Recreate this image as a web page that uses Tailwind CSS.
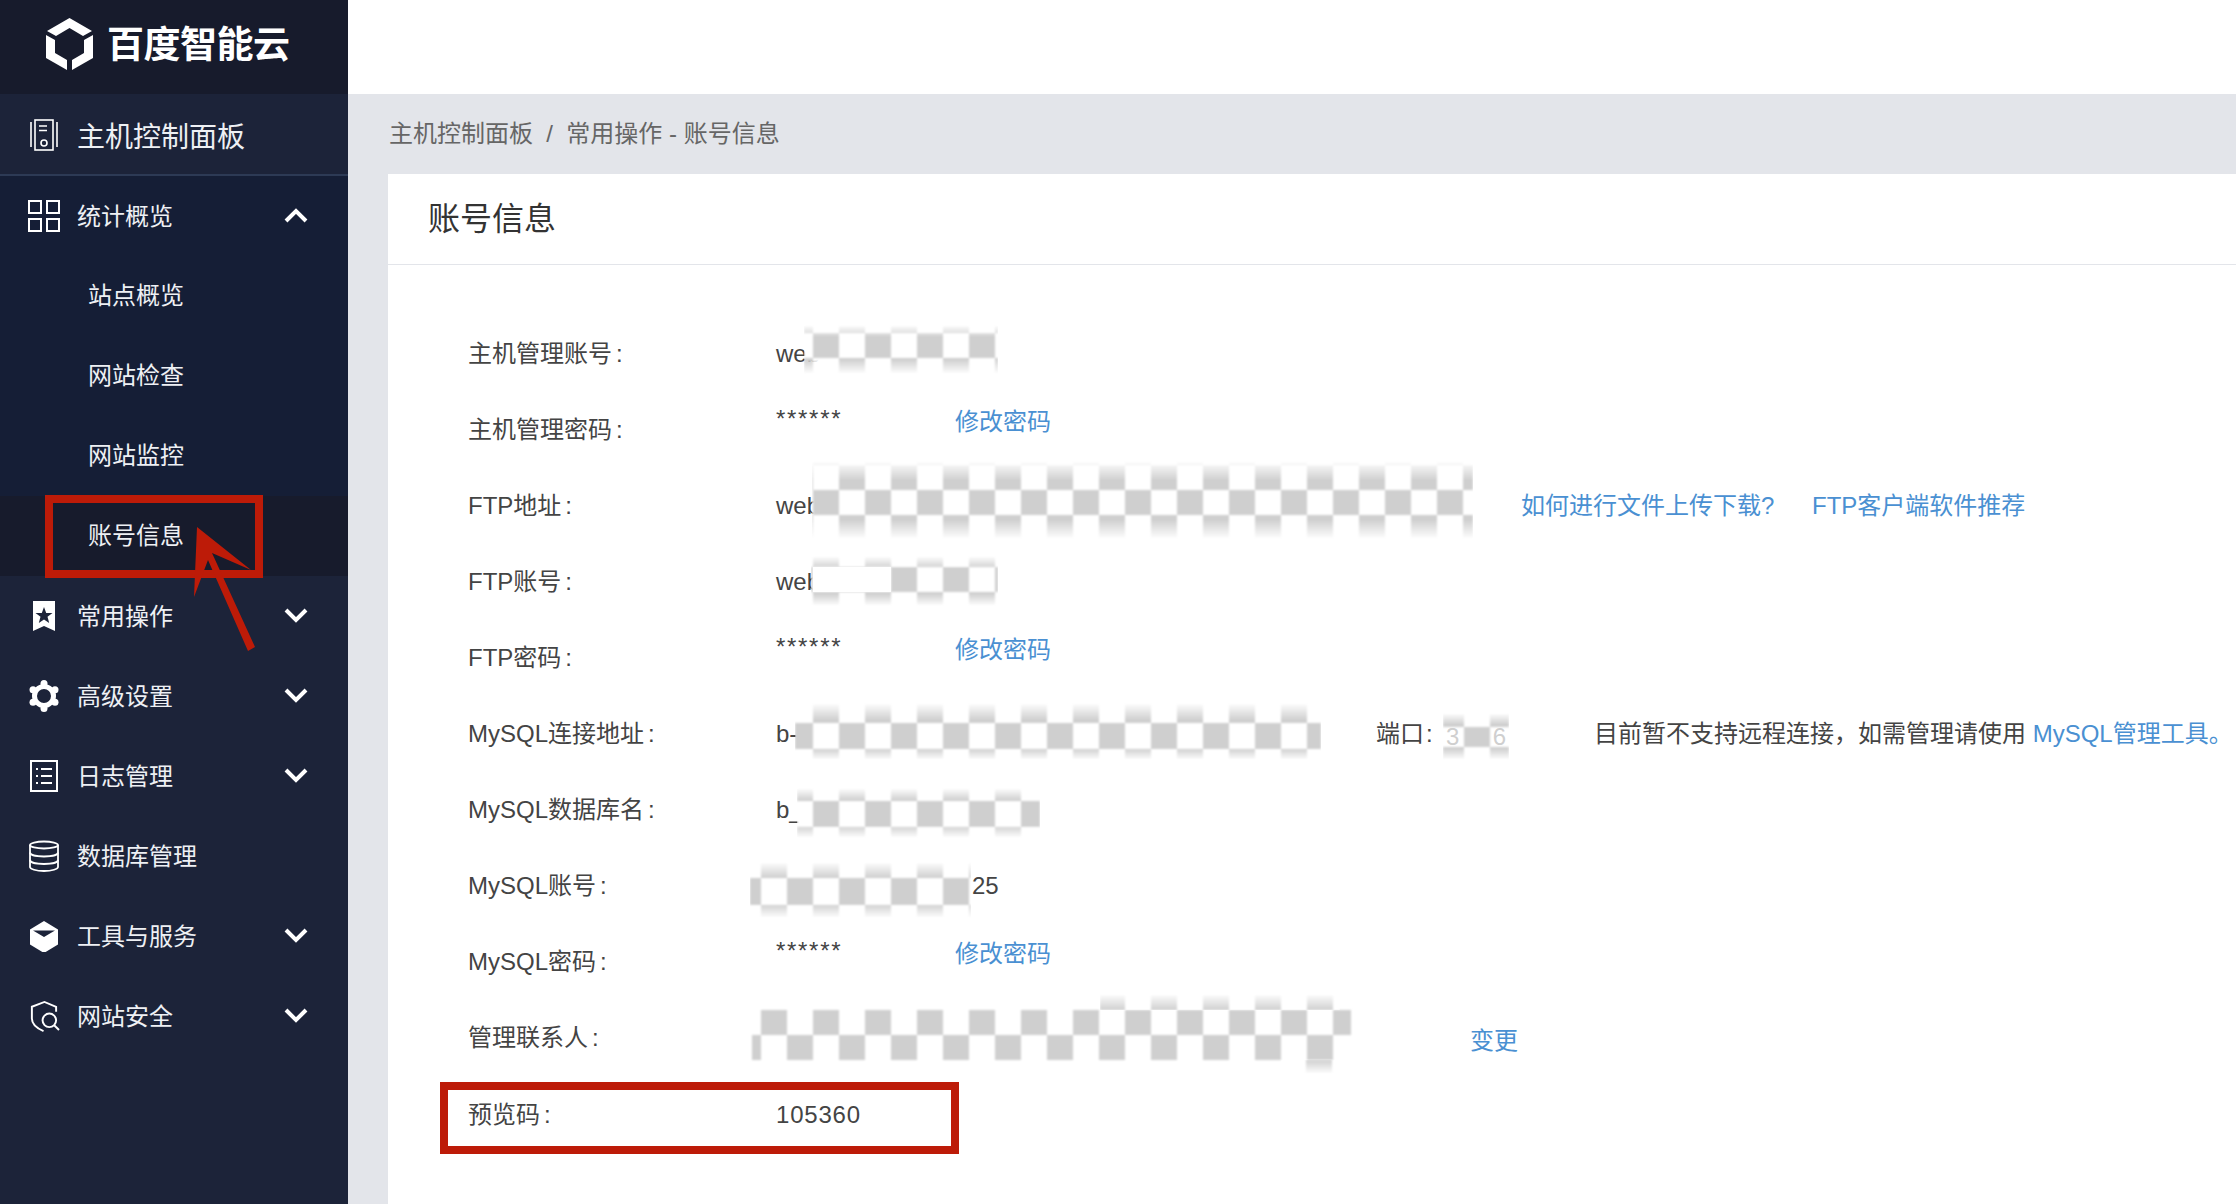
<!DOCTYPE html>
<html lang="zh" class="h-[1204px] overflow-hidden">
<head>
<meta charset="utf-8">
<title>账号信息</title>
<script src="https://cdn.jsdelivr.net/npm/@tailwindcss/browser@4"></script>
</head>
<body class="h-[1204px] font-['Liberation_Sans','Noto_Sans_CJK_SC',sans-serif] overflow-hidden">
<div class="relative flex w-[2236px] h-[1204px] bg-white overflow-hidden">

  <!-- Sidebar -->
  <aside class="w-[348px] shrink-0 bg-[#1c2339] text-[#eef0f4]">
    <div class="h-[94px] bg-[#171b2c] flex items-center pl-[46px] pb-[6px] gap-[14px] text-white">
      <svg class="w-[47px] h-[52px]" viewBox="0 0 47 52" fill="#fff"><path d="M23.500 0L46 13L37 18L23.500 10L10 18L1 13Z"/><path d="M0 17L9 22V35L21 42V52L0 40Z"/><path d="M47 17L38 22V35L26 42V52L47 40Z"/></svg>
      <span class="text-[37px] font-bold leading-none tracking-[-0.5px] mt-[3px]">百度智能云</span>
    </div>
    <div class="h-[82px] flex items-center border-b-2 border-[#2d3a55] pl-[30px] pt-[2px] gap-[19px]">
      <svg class="w-[28px] h-[32px]" viewBox="0 0 28 32" fill="none" stroke="#fff" stroke-width="1.600"><path d="M1 3V28M27 3V28"/><rect x="5" y="1" width="18" height="30"/><path d="M9 7H17M9 11.500H17"/><circle cx="14" cy="24" r="3"/></svg>
      <span class="text-[28px] mt-[5px]">主机控制面板</span>
    </div>
    <div class="bg-[#151e36]">
      <div class="h-[80px] flex items-center pl-[28px] pr-[40px] gap-[17px] text-[24px]">
        <svg class="w-[32px] h-[32px]" viewBox="0 0 32 32" fill="none" stroke="#fff" stroke-width="2"><rect x="1" y="1" width="12" height="12"/><rect x="19" y="1" width="12" height="12"/><rect x="1" y="19" width="12" height="12"/><rect x="19" y="19" width="12" height="12"/></svg>
        <span class="flex-1 mt-[2px]">统计概览</span>
        <svg class="w-[24px] h-[16px]" viewBox="0 0 24 16" fill="none" stroke="#fff" stroke-width="4"><path d="M2 13L12 3L22 13"/></svg>
      </div>
      <div class="h-[80px] flex items-center pl-[88px] pb-[1px] text-[24px]">站点概览</div>
      <div class="h-[80px] flex items-center pl-[88px] pb-[1px] text-[24px]">网站检查</div>
      <div class="h-[80px] flex items-center pl-[88px] pb-[1px] text-[24px]">网站监控</div>
      <div class="h-[80px] flex items-center pl-[88px] pb-[1px] text-[24px] bg-[#171b2c]">账号信息</div>
    </div>
    <div class="h-[80px] flex items-center pl-[28px] pr-[40px] gap-[17px] text-[24px]">
      <svg class="w-[32px] h-[32px]" viewBox="0 0 32 32" fill="#fff"><path fill-rule="evenodd" d="M5 1H27V31L16 26L5 31ZM16 7L18.200 13H24.500L19.500 16.800L21.200 23L16 19.400L10.800 23L12.500 16.800L7.500 13H13.800Z"/></svg>
      <span class="flex-1 mt-[2px]">常用操作</span>
      <svg class="w-[24px] h-[16px] -mt-[2px]" viewBox="0 0 24 16" fill="none" stroke="#fff" stroke-width="4"><path d="M2 3L12 13L22 3"/></svg>
    </div>
    <div class="h-[80px] flex items-center pl-[28px] pr-[40px] gap-[17px] text-[24px]">
      <svg class="w-[32px] h-[32px]" viewBox="0 0 32 32"><circle cx="16" cy="16" r="9.500" fill="none" stroke="#fff" stroke-width="5"/><g fill="#fff"><circle cx="16" cy="3.500" r="3.500"/><circle cx="16" cy="28.500" r="3.500"/><circle cx="5" cy="9.700" r="3.500"/><circle cx="27" cy="9.700" r="3.500"/><circle cx="5" cy="22.300" r="3.500"/><circle cx="27" cy="22.300" r="3.500"/></g></svg>
      <span class="flex-1 mt-[2px]">高级设置</span>
      <svg class="w-[24px] h-[16px] -mt-[2px]" viewBox="0 0 24 16" fill="none" stroke="#fff" stroke-width="4"><path d="M2 3L12 13L22 3"/></svg>
    </div>
    <div class="h-[80px] flex items-center pl-[28px] pr-[40px] gap-[17px] text-[24px]">
      <svg class="w-[32px] h-[32px]" viewBox="0 0 32 32" fill="none" stroke="#fff" stroke-width="2"><rect x="3" y="1" width="26" height="30"/><path d="M8 9H10M13 9H24M8 16H10M13 16H24M8 23H10M13 23H24"/></svg>
      <span class="flex-1 mt-[2px]">日志管理</span>
      <svg class="w-[24px] h-[16px] -mt-[2px]" viewBox="0 0 24 16" fill="none" stroke="#fff" stroke-width="4"><path d="M2 3L12 13L22 3"/></svg>
    </div>
    <div class="h-[80px] flex items-center pl-[28px] pr-[40px] gap-[17px] text-[24px]">
      <svg class="w-[32px] h-[32px]" viewBox="0 0 32 32" fill="none" stroke="#fff" stroke-width="1.800"><ellipse cx="16" cy="5" rx="14" ry="3.500"/><path d="M2 5V27C2 29 8 31 16 31S30 29 30 27V5"/><path d="M2 12.500C2 15 8 16.500 16 16.500S30 15 30 12.500M2 20C2 22.500 8 24 16 24S30 22.500 30 20"/></svg>
      <span class="flex-1 mt-[2px]">数据库管理</span>
    </div>
    <div class="h-[80px] flex items-center pl-[28px] pr-[40px] gap-[17px] text-[24px]">
      <svg class="w-[32px] h-[32px]" viewBox="0 0 32 32" fill="#fff"><path fill-rule="evenodd" d="M16 1L30 9.500V24.500L16 33L2 24.500V9.500ZM5 10.500H27L16 17Z"/></svg>
      <span class="flex-1 mt-[2px]">工具与服务</span>
      <svg class="w-[24px] h-[16px] -mt-[2px]" viewBox="0 0 24 16" fill="none" stroke="#fff" stroke-width="4"><path d="M2 3L12 13L22 3"/></svg>
    </div>
    <div class="h-[80px] flex items-center pl-[28px] pr-[40px] gap-[17px] text-[24px]">
      <svg class="w-[32px] h-[32px]" viewBox="0 0 33 33" fill="none" stroke="#fff" stroke-width="2"><path d="M29 12V7L17 2L4 7V19C4 25 9 29 16 32"/><circle cx="22" cy="21" r="7"/><path d="M27 26L32 31"/></svg>
      <span class="flex-1 mt-[2px]">网站安全</span>
      <svg class="w-[24px] h-[16px] -mt-[2px]" viewBox="0 0 24 16" fill="none" stroke="#fff" stroke-width="4"><path d="M2 3L12 13L22 3"/></svg>
    </div>
  </aside>

  <!-- Main -->
  <main class="flex-1 flex flex-col">
    <div class="h-[94px] bg-white"></div>
    <div class="h-[80px] bg-[#e3e5ea] flex items-center pl-[41px] pb-[1px] text-[24px] text-[#666]">主机控制面板&nbsp;&nbsp;/&nbsp;&nbsp;常用操作 - 账号信息</div>
    <div class="flex-1 bg-[#e3e5ea] pl-[40px]">
      <div class="h-full bg-white">
        <div class="h-[91px] flex items-center pl-[40px] text-[32px] text-[#333] border-b border-[#e3e5ea]">账号信息</div>
        <div class="pt-[51px] pl-[80px] text-[24px] text-[#444]">
          <div class="h-[76px] flex items-center"><span class="w-[308px]">主机管理账号<i class="ml-[4px] not-italic">:</i></span><span>web</span></div>
          <div class="h-[76px] flex items-center"><span class="w-[308px]">主机管理密码<i class="ml-[4px] not-italic">:</i></span><span class="w-[179px] -mt-[22px] tracking-[1.700px]">******</span><a class="text-[#4a90d2] -mt-[16px]">修改密码</a></div>
          <div class="h-[76px] flex items-center"><span class="w-[308px]">FTP地址<i class="ml-[4px] not-italic">:</i></span><span class="w-[745px]">web</span><a class="text-[#4a90d2] w-[291px]">如何进行文件上传下载?</a><a class="text-[#4a90d2]">FTP客户端软件推荐</a></div>
          <div class="h-[76px] flex items-center"><span class="w-[308px]">FTP账号<i class="ml-[4px] not-italic">:</i></span><span>web</span></div>
          <div class="h-[76px] flex items-center"><span class="w-[308px]">FTP密码<i class="ml-[4px] not-italic">:</i></span><span class="w-[179px] -mt-[22px] tracking-[1.700px]">******</span><a class="text-[#4a90d2] -mt-[16px]">修改密码</a></div>
          <div class="h-[76px] flex items-center"><span class="w-[308px]">MySQL连接地址<i class="ml-[4px] not-italic">:</i></span><span class="w-[600px]">b-</span><span class="w-[218px]">端口<i class="ml-[2px] not-italic">:</i></span><span class="whitespace-nowrap">目前暂不支持远程连接，如需管理请使用 <a class="text-[#4a90d2]">MySQL管理工具。</a></span></div>
          <div class="h-[76px] flex items-center"><span class="w-[308px]">MySQL数据库名<i class="ml-[4px] not-italic">:</i></span><span>b_</span></div>
          <div class="h-[76px] flex items-center"><span class="w-[308px]">MySQL账号<i class="ml-[4px] not-italic">:</i></span><span class="pl-[196px]">25</span></div>
          <div class="h-[76px] flex items-center"><span class="w-[308px]">MySQL密码<i class="ml-[4px] not-italic">:</i></span><span class="w-[179px] -mt-[22px] tracking-[1.700px]">******</span><a class="text-[#4a90d2] -mt-[16px]">修改密码</a></div>
          <div class="h-[76px] flex items-center"><span class="w-[308px]">管理联系人<i class="ml-[4px] not-italic">:</i></span><a class="text-[#4a90d2] pl-[694px] mt-[6px]">变更</a></div>
          <div class="h-[78px] flex items-center"><span class="w-[308px]">预览码<i class="ml-[4px] not-italic">:</i></span><span class="tracking-[0.800px]">105360</span></div>
        </div>
      </div>
    </div>
  </main>

  <!-- Mosaic patches over the hidden values -->
  <div class="absolute left-[804px] top-[325px] w-[194px] h-[49px] blur-[1px] [mask-image:linear-gradient(to_bottom,transparent,black_25%,black_70%,transparent)] bg-[repeating-conic-gradient(#cfcfcf_0_25%,#fff_0_50%)] bg-[size:52px_50px] bg-[position:-17px_8px]"></div>
  <div class="absolute left-[812px] top-[461px] w-[661px] h-[78px] blur-[1px] [mask-image:linear-gradient(to_bottom,transparent,black_25%,black_75%,transparent)] bg-[repeating-conic-gradient(#cfcfcf_0_25%,#fff_0_50%)] bg-[size:52px_50px] bg-[position:-25px_29px]"></div>
  <div class="absolute left-[811px] top-[556px] w-[187px] h-[50px] blur-[1px] [mask-image:linear-gradient(to_bottom,transparent,black_25%,black_75%,transparent)] bg-[repeating-conic-gradient(#cfcfcf_0_25%,#fff_0_50%)] bg-[size:52px_50px] bg-[position:-50px_11px]"></div>
  <div class="absolute left-[813px] top-[567px] w-[78px] h-[25px] bg-white"></div>
  <div class="absolute left-[795px] top-[703px] w-[526px] h-[57px] blur-[1px] [mask-image:linear-gradient(to_bottom,transparent,black_30%,black_80%,transparent)] bg-[repeating-conic-gradient(#cfcfcf_0_25%,#fff_0_50%)] bg-[size:52px_52px] bg-[position:18px_20px]"></div>
  <div class="absolute left-[1443px] top-[713px] w-[66px] h-[47px] blur-[1px] [mask-image:linear-gradient(to_bottom,transparent,black_25%,black_75%,transparent)] bg-[repeating-conic-gradient(#cfcfcf_0_25%,#fff_0_50%)] bg-[size:52px_40px] bg-[position:-5px_14px]"></div>
  <div class="absolute left-[1446px] top-[719px] w-[60px] flex justify-between text-[24px] text-[#cfcfcf]"><span>3</span><span>6</span></div>
  <div class="absolute left-[797px] top-[788px] w-[243px] h-[50px] blur-[1px] [mask-image:linear-gradient(to_bottom,transparent,black_25%,black_75%,transparent)] bg-[repeating-conic-gradient(#cfcfcf_0_25%,#fff_0_50%)] bg-[size:52px_52px] bg-[position:-10px_13px]"></div>
  <div class="absolute left-[750px] top-[862px] w-[221px] h-[56px] blur-[1px] [mask-image:linear-gradient(to_bottom,transparent,black_28%,black_75%,transparent)] bg-[repeating-conic-gradient(#cfcfcf_0_25%,#fff_0_50%)] bg-[size:52px_54px] bg-[position:11px_16px]"></div>
  <div class="absolute left-[752px] top-[1010px] w-[599px] h-[50px] blur-[1px] bg-[repeating-conic-gradient(#cfcfcf_0_25%,#fff_0_50%)] bg-[size:52px_50px] bg-[position:-17px_0px]"></div>
  <div class="absolute left-[1100px] top-[994px] w-[240px] h-[16px] blur-[1px] [mask-image:linear-gradient(to_bottom,transparent,black)] bg-[repeating-conic-gradient(#cfcfcf_0_25%,#fff_0_50%)] bg-[size:52px_50px] bg-[position:-1px_-34px]"></div>
  <div class="absolute left-[1281px] top-[1060px] w-[66px] h-[14px] blur-[1px] [mask-image:linear-gradient(to_bottom,black,transparent)] bg-[repeating-conic-gradient(#cfcfcf_0_25%,#fff_0_50%)] bg-[size:52px_50px] bg-[position:-1px_0px]"></div>

  <!-- Red annotations -->
  <div class="absolute left-[45px] top-[495px] w-[218px] h-[83px] border-[8px] border-[#bd1b08]"></div>
  <div class="absolute left-[440px] top-[1082px] w-[519px] h-[72px] border-[8px] border-[#bd1b08]"></div>
  <svg class="absolute left-[190px] top-[520px] w-[80px] h-[135px]" viewBox="0 0 80 135" fill="#bd1b08"><path d="M7 7L61 50L22 33L65 127L58 131L18 40L4 77Z"/></svg>
</div>
</body>
</html>
